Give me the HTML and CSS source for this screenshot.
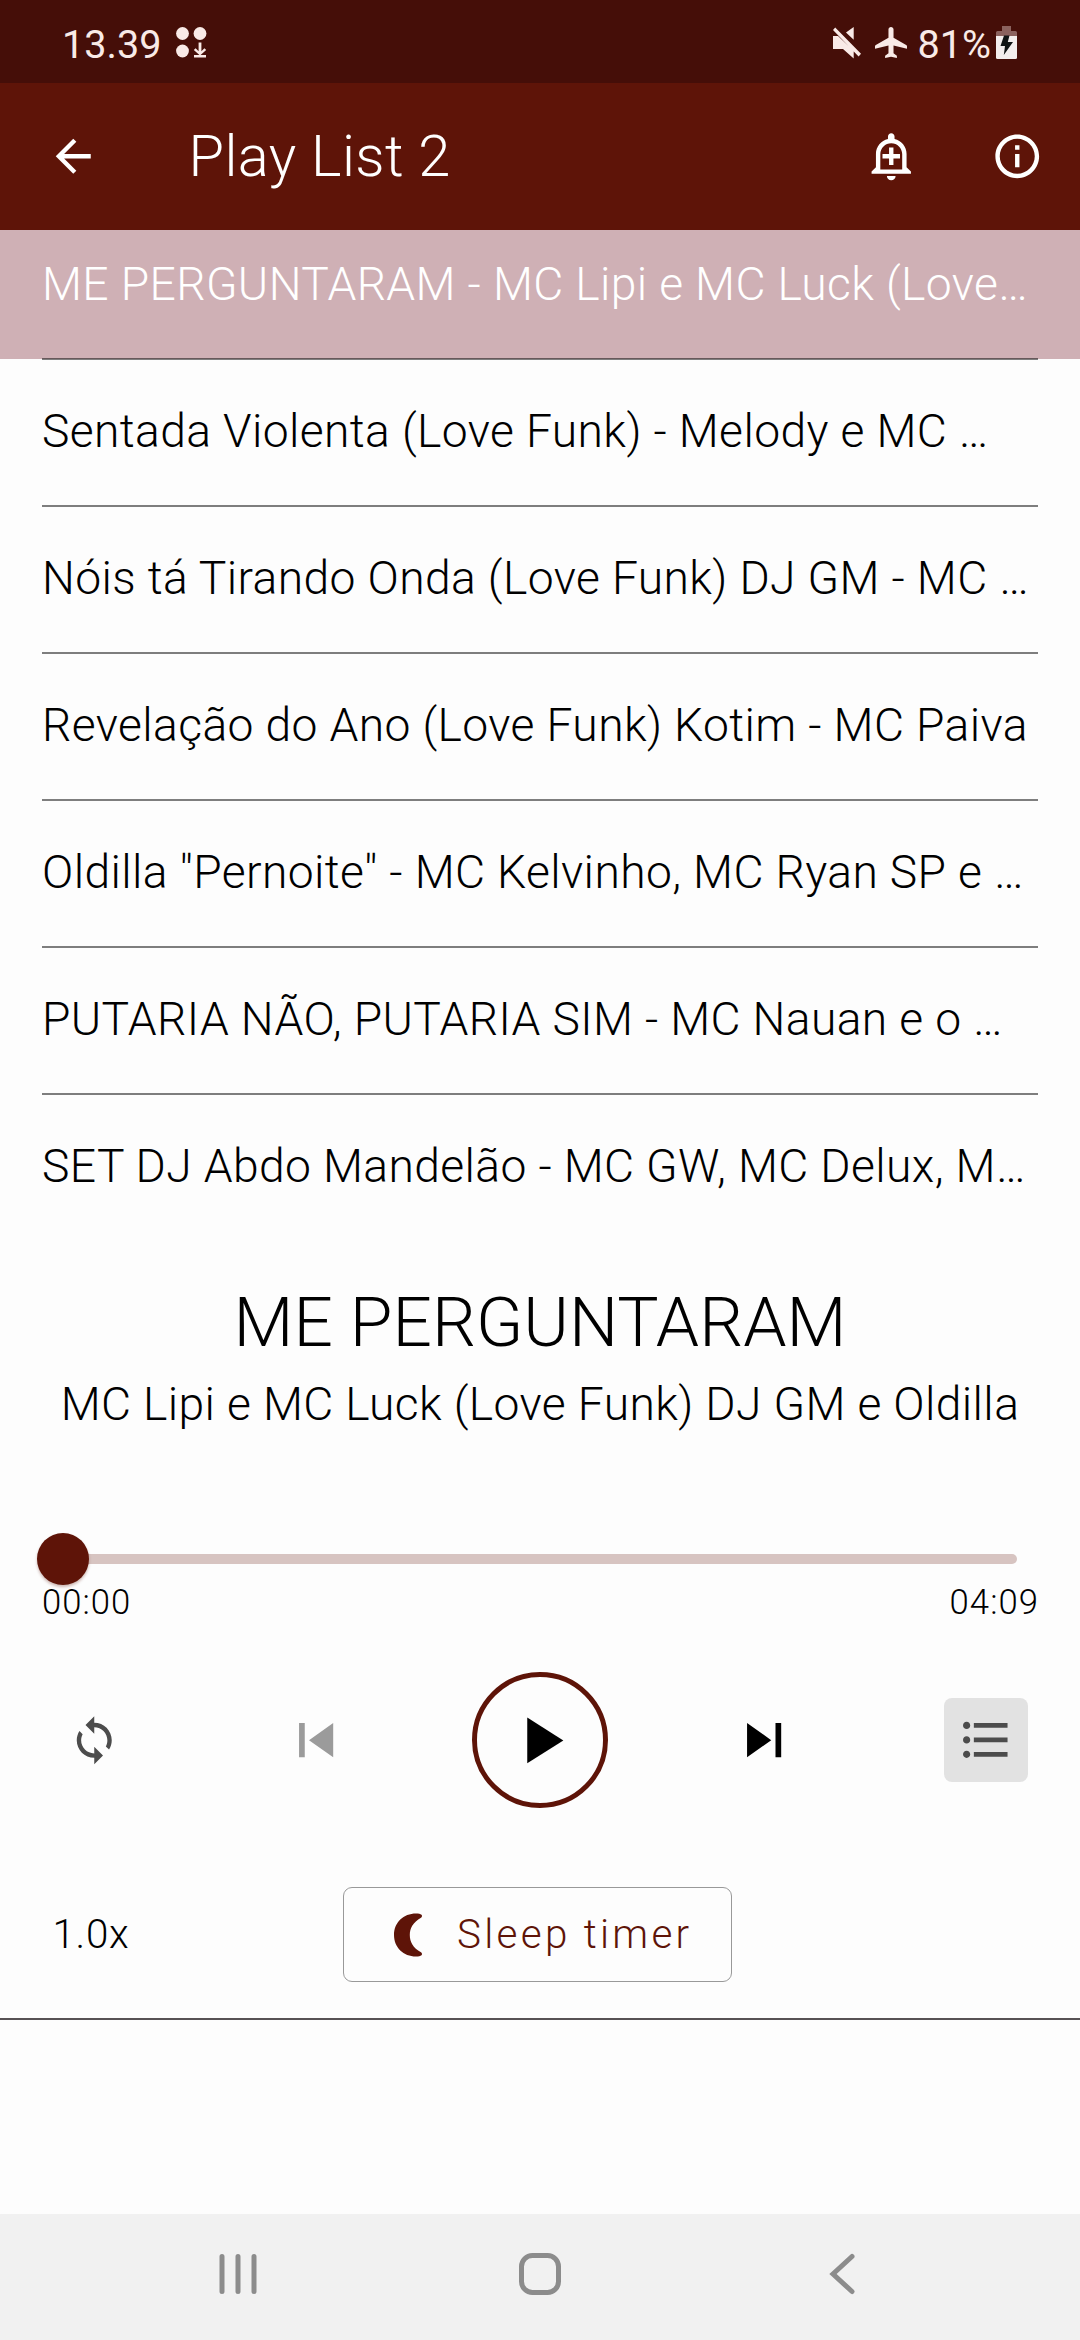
FILE: index.html
```html
<!DOCTYPE html>
<html lang="pt">
<head>
<meta charset="utf-8">
<title>Play List 2</title>
<link rel="stylesheet" href="styles.css">
</head>
<body>
<div class="screen">
  <div class="status">
    <span class="status-text">13.39</span>
    <svg class="dots" width="32" height="34" viewBox="0 0 32 34" fill="currentColor"><circle cx="7.5" cy="8.5" r="6.4"/><circle cx="25" cy="8.5" r="6.4"/><circle cx="7.5" cy="26" r="6.4"/><path d="M23.6 17.5h2.8v8.7l3-3 1.8 1.8-6.2 5.6-6.2-5.6 1.8-1.8 3 3zM19 30h12v2.6H19z"/></svg>
    <span class="spacer"></span>
    <svg class="mute" width="30" height="34" viewBox="0 0 30 34" fill="currentColor"><path d="M14 7.5L21.7 2v12.8zM1 11h5l15.7 15v7.5L11 24H1zM1 5l2.2-2.5L29 28.8l-2.4 2.7z"/></svg>
    <svg class="plane" width="32" height="31" viewBox="2 2 19 20" preserveAspectRatio="none" fill="currentColor"><path d="M21 16v-1.6c0-.4-.2-.6-.5-.8L13 9V3.500c0-.83-.67-1.500-1.500-1.500S10 2.670 10 3.500V9l-7.500 4.600c-.3.200-.5.400-.5.800V16l8-2v5l-2 1.500V22l3.500-.8 3.500.8v-1.500L13 19v-5z"/></svg>
    <span class="status-text battery-level">81%</span>
    <svg class="battery" width="21" height="33" viewBox="0 0 21 33"><path d="M6 0h9v5h4.500Q21 5 21 6.500V10H0V6.500Q0 5 1.500 5H6z" fill="#8b625e"/><path d="M0 10h21v21.500q0 1.500-1.500 1.500h-18Q0 33 0 31.500z" fill="#f3eeed"/><path d="M8 9.500h5.500L11.800 16H17L7.800 29 9 20H4.500z" fill="#101414"/></svg>
  </div>
  <header class="appbar">
    <svg class="icon" viewBox="0 0 24 24" fill="currentColor"><path d="M20 11H7.830l5.590-5.590L12 4l-8 8 8 8 1.410-1.410L7.830 13H20v-2z"/></svg>
    <h1 class="title">Play List 2</h1>
    <svg class="icon" viewBox="0 0 24 24" fill="currentColor"><path d="M10.010 21.010c0 1.100.89 1.990 1.990 1.990s1.990-.89 1.990-1.990h-3.980zM12 6c2.760 0 5 2.240 5 5v7H7v-7c0-2.760 2.240-5 5-5zm0-4.500c-.83 0-1.500.67-1.500 1.500v1.170C7.360 4.850 5 7.650 5 11v6l-2 2v1h18v-1l-2-2v-6c0-3.350-2.360-6.150-5.500-6.830V3c0-.83-.67-1.500-1.500-1.500zM13 8h-2v3H8v2h3v3h2v-3h3v-2h-3z"/></svg>
    <svg class="icon info" viewBox="0 0 24 24" fill="currentColor"><path d="M11 7h2v2h-2zm0 4h2v6h-2zm1-9C6.480 2 2 6.480 2 12s4.480 10 10 10 10-4.480 10-10S17.520 2 12 2zm0 18c-4.410 0-8-3.590-8-8s3.590-8 8-8 8 3.590 8 8-3.590 8-8 8z"/></svg>
  </header>
  <main class="list">
    <div class="song active">ME PERGUNTARAM - MC Lipi e MC Luck (Love…</div>
    <div class="rule"></div>
    <div class="song">Sentada Violenta (Love Funk) - Melody e MC …</div>
    <div class="rule"></div>
    <div class="song">Nóis tá Tirando Onda (Love Funk) DJ GM - MC …</div>
    <div class="rule"></div>
    <div class="song">Revelação do Ano (Love Funk) Kotim - MC Paiva</div>
    <div class="rule"></div>
    <div class="song">Oldilla "Pernoite" - MC Kelvinho, MC Ryan SP e …</div>
    <div class="rule"></div>
    <div class="song">PUTARIA NÃO, PUTARIA SIM - MC Nauan e o …</div>
    <div class="rule"></div>
    <div class="song">SET DJ Abdo Mandelão - MC GW, MC Delux, M…</div>
  </main>
  <section class="player">
    <h2 class="now">ME PERGUNTARAM</h2>
    <p class="artist">MC Lipi e MC Luck (Love Funk) DJ GM e Oldilla</p>
    <div class="slider"><div class="track"></div><div class="thumb"></div></div>
    <div class="times"><span>00:00</span><span>04:09</span></div>
    <div class="controls">
      <button class="square"><svg class="icon" viewBox="0 0 24 24" fill="currentColor"><path d="M12 4V1L8 5l4 4V6c3.310 0 6 2.690 6 6 0 1.010-.25 1.970-.7 2.800l1.460 1.460C19.540 15.030 20 13.570 20 12c0-4.420-3.580-8-8-8zm0 14c-3.310 0-6-2.690-6-6 0-1.010.25-1.970.7-2.800L5.240 7.740C4.460 8.970 4 10.430 4 12c0 4.420 3.580 8 8 8v3l4-4-4-4v3z"/></svg></button>
      <div class="transport">
        <svg class="skip disabled" viewBox="0 0 24 24" fill="currentColor"><path d="M6 6h2v12H6zm3.500 6l8.500 6V6z"/></svg>
        <button class="play"><svg viewBox="0 0 24 24" fill="currentColor"><path d="M8 5v14l11-7z"/></svg></button>
        <svg class="skip" viewBox="0 0 24 24" fill="currentColor"><path d="M6 18l8.500-6L6 6v12zM16 6v12h2V6h-2z"/></svg>
      </div>
      <button class="square on"><svg class="list-icon" viewBox="0 0 24 24" fill="currentColor"><path d="M4 10.500c-.83 0-1.500.67-1.500 1.500s.67 1.500 1.500 1.500 1.500-.67 1.500-1.500-.67-1.500-1.500-1.500zm0-6c-.83 0-1.500.67-1.500 1.500S3.170 7.500 4 7.500 5.500 6.830 5.500 6 4.830 4.500 4 4.500zm0 12c-.83 0-1.500.68-1.500 1.500s.68 1.500 1.500 1.500 1.500-.68 1.500-1.500-.67-1.500-1.500-1.500zM7 19h14v-2H7v2zm0-6h14v-2H7v2zm0-8v2h14V5H7z"/></svg></button>
    </div>
    <div class="extras">
      <span class="speed">1.0x</span>
      <button class="sleep"><svg width="28" height="44" viewBox="0 0 28 44" fill="currentColor"><path d="M22 .5C24.500.5 26.500.9 27.500 1.700c.8.800.6 2.300-.5 3C19 9.300 15.800 15 15.800 22S19 34.700 27 39.300c1.100.7 1.300 2.200.5 3-1 .8-3 1.200-5.500 1.200C9.500 43.500 0 34.500 0 22S9.500.5 22 .5z"/></svg><span>Sleep timer</span></button>
    </div>
  </section>
  <div class="ad"></div>
  <nav class="nav">
    <svg width="42" height="44" viewBox="0 0 42 44"><path d="M5 4.500v35M21 4.500v35M37 4.500v35"/></svg>
    <svg width="44" height="44" viewBox="0 0 44 44"><rect x="3.500" y="3.500" width="37" height="37" rx="11"/></svg>
    <svg width="36" height="44" viewBox="0 0 36 44"><path d="M31 4.500L12 22l19 17.500"/></svg>
  </nav>
</div>
</body>
</html>
```
FILE: styles.css
```css
* { box-sizing: border-box; }
body {
  margin: 0;
  background: #fdfdfd;
  color: #000;
  font-family: Roboto, "Noto Sans", sans-serif;
  font-weight: 300;
}
h1, h2, p { margin: 0; font-weight: 300; }
button {
  padding: 0;
  border: 0;
  background: none;
  font: inherit;
  color: inherit;
}
svg { display: block; flex: none; }
.screen {
  display: flex;
  flex-direction: column;
  width: 1080px;
  height: 2340px;
  overflow: hidden;
}

/* System status bar */
.status {
  display: flex;
  align-items: flex-start;
  height: 83px;
  padding: 25px 63px 0 62px;
  background: #450e08;
  color: #f9eae7;
}
.status-text {
  font-size: 39.6px;
  font-weight: 400;
  line-height: 39px;
}
.dots { margin-left: 14px; }
.spacer { flex: 1; }
.mute { margin-right: 13px; }
.plane { margin: 2px 11px 0 0; }
.battery-level { margin-right: 5px; }
.battery { margin-top: 1px; }

/* App bar */
.appbar {
  display: flex;
  align-items: center;
  height: 147px;
  padding: 0 36.500px 0 47px;
  background: #5e1408;
  color: #fff;
}
.icon { width: 52.500px; height: 52.500px; }
.title {
  flex: 1;
  margin-left: 89px;
  padding-bottom: 2px;
  font-size: 57.750px;
  line-height: 68px;
  letter-spacing: 0.390px;
}
.info { margin-left: 73.500px; }

/* Song list */
.list { height: 1010px; overflow: hidden; }
.song {
  height: 145px;
  padding: 44px 42px 0;
  font-size: 46.200px;
  line-height: 54px;
  letter-spacing: 0.390px;
  white-space: nowrap;
}
.active {
  height: 128px;
  padding-top: 27px;
  background: #cfb0b5;
  box-shadow: 0 1px #cfb0b5;
  color: #fff;
}
.rule {
  height: 2px;
  margin: 0 42px;
  background: rgba(0, 0, 0, 0.5);
}

/* Player */
.player {
  height: 780px;
  padding-top: 42px;
  border-bottom: 2px solid #575254;
}
.now {
  font-size: 69.300px;
  line-height: 82px;
  text-align: center;
}
.artist {
  margin-top: 13px;
  font-size: 46.200px;
  line-height: 54px;
  letter-spacing: 0.390px;
  text-align: center;
}
.slider {
  position: relative;
  display: flex;
  align-items: center;
  height: 44px;
  margin: 106px 63px 0;
}
.track {
  flex: 1;
  height: 10.500px;
  border-radius: 6px;
  background: #d7c4c1;
}
.thumb {
  position: absolute;
  left: -26px;
  top: -4px;
  width: 52px;
  height: 52px;
  border-radius: 50%;
  background: #5e1408;
  box-shadow: 0 2px 3px rgba(94, 20, 8, 0.3);
}
.times {
  display: flex;
  justify-content: space-between;
  padding: 0 41px 0 42px;
  font-size: 34.650px;
  line-height: 42px;
  letter-spacing: 1.050px;
}
.controls {
  display: flex;
  align-items: center;
  justify-content: space-between;
  height: 136px;
  margin-top: 49px;
  padding: 0 52.500px;
}
.square {
  display: flex;
  align-items: center;
  justify-content: center;
  width: 84px;
  height: 84px;
  border-radius: 8px;
  color: #4c4c4c;
}
.on { background: #e2e2e2; }
.list-icon { width: 57.750px; height: 57.750px; }
.transport {
  display: flex;
  align-items: center;
  justify-content: space-between;
  width: 516px;
}
.skip { width: 68.250px; height: 68.250px; }
.disabled { color: #9b9b9b; }
.play {
  display: flex;
  align-items: center;
  justify-content: center;
  width: 136px;
  height: 136px;
  border: 5px solid #5e1408;
  border-radius: 50%;
}
.play svg { width: 78.750px; height: 78.750px; }
.extras {
  display: flex;
  align-items: center;
  margin-top: 79px;
  padding-left: 52.500px;
  font-size: 40.400px;
  line-height: 48px;
}
.speed { width: 290.500px; letter-spacing: 0.660px; }
.sleep {
  display: flex;
  align-items: center;
  gap: 35px;
  width: 389px;
  height: 95px;
  padding-left: 50px;
  border: 1px solid #999;
  border-radius: 9px;
  color: #5e1408;
  letter-spacing: 3.280px;
}
.ad { flex: 1; }

/* System navigation */
.nav {
  display: flex;
  align-items: center;
  justify-content: space-between;
  height: 126px;
  padding: 0 223px 6px 217px;
  background: #f1f1f1;
}
.nav svg {
  fill: none;
  stroke: #8c8c8c;
  stroke-width: 5;
  stroke-linecap: round;
}
```
